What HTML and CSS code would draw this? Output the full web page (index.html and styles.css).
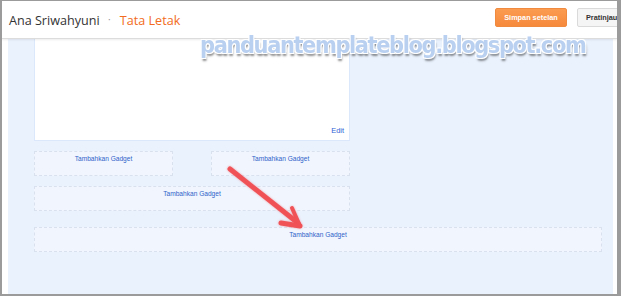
FILE: index.html
```html
<!DOCTYPE html>
<html lang="id">
<head>
    <meta charset="UTF-8">
    <title>Tata Letak</title>
    <link rel="stylesheet" href="styles.css">
</head>
<body>
    <div class="frame">
        <!-- top bar -->
        <div class="topbar">
            <div class="crumb">
                <span class="blog">Ana Sriwahyuni</span>
                <span class="sep">&middot;</span>
                <span class="page">Tata Letak</span>
            </div>
            <div class="actions">
                <button class="btn btn-save">Simpan setelan</button>
                <button class="btn btn-preview">Pratinjau</button>
            </div>
        </div>

        <!-- layout editor -->
        <div class="main">
            <div class="canvas">
                <div class="widget">
                    <a class="edit">Edit</a>
                </div>
                <div class="row-split">
                    <div class="slot">Tambahkan Gadget</div>
                    <div class="slot">Tambahkan Gadget</div>
                </div>
                <div class="slot slot-half">Tambahkan Gadget</div>
                <div class="slot slot-full">Tambahkan Gadget</div>
            </div>
        </div>

        <div class="watermark">panduantemplateblog.blogspot.com</div>

        <svg class="arrow" width="90" height="75" viewBox="0 0 90 75">
            <g stroke="#f0474c" stroke-linecap="round" fill="none" opacity="0.9">
                <path d="M6 7 L74 61" stroke-width="5"/>
                <path d="M76 64 L57 61" stroke-width="5"/>
                <path d="M76 64 L68 46" stroke-width="4"/>
            </g>
        </svg>
    </div>
</body>
</html>
```

FILE: styles.css
```css
html, body {
    margin: 0;
    padding: 0;
    background-color: #fff;
}
body {
    width: 621px;
    height: 298px;
    overflow: hidden;
}
.frame {
    position: relative;
    width: 621px;
    height: 296px;
    box-sizing: border-box;
    border: 2px solid #9b9b9b;
    border-top-width: 1px;
    border-right-width: 4px;
    overflow: hidden;
    display: flex;
    flex-direction: column;
}
.topbar {
    height: 37px;
    flex-shrink: 0;
    display: flex;
    align-items: flex-start;
    justify-content: space-between;
    border-bottom: 1px solid #dcdcdc;
    box-shadow: 0 1px 2px rgba(0, 0, 0, 0.08);
    position: relative;
    z-index: 1;
    background-color: #fff;
}
.crumb {
    font-family: "Open Sans", sans-serif;
    font-size: 12.6px;
    padding: 11px 0 0 7px;
    white-space: nowrap;
}
.blog {
    color: #333;
}
.sep {
    color: #999;
    font-size: 10px;
    vertical-align: 2px;
    margin: 0 6px 0 5px;
}
.page {
    color: #f26b21;
}
.actions {
    display: flex;
    gap: 10px;
    padding-top: 7px;
    margin-right: -14px;
}
.btn {
    font-family: "Liberation Sans", Arial, sans-serif;
    font-weight: bold;
    font-size: 7.3px;
    height: 19px;
    border-radius: 2px;
    padding: 0;
    white-space: nowrap;
}
.btn-save {
    width: 72px;
    color: #fff;
    background: linear-gradient(#fb9c50, #f6893c);
    border: 1px solid #ef8a3e;
}
.btn-preview {
    width: 54px;
    text-align: left;
    padding-left: 8px;
    color: #333;
    background-color: #f5f5f5;
    border: 1px solid #dadada;
}
.main {
    flex: 1;
    padding: 0 4px 0 6px;
}
.canvas {
    height: 100%;
    box-sizing: border-box;
    background-color: #eaf2fd;
    padding: 0 11px 0 26px;
    font-family: "Liberation Sans", Arial, sans-serif;
}
.widget {
    width: 316px;
    height: 102px;
    box-sizing: border-box;
    background-color: #fff;
    border: 1px solid #dbe7fa;
    border-top: none;
    display: flex;
    align-items: flex-end;
    justify-content: flex-end;
    padding: 0 5px 5px 0;
}
.edit {
    color: #2c62d6;
    font-size: 7.4px;
}
.slot {
    box-sizing: border-box;
    height: 25px;
    border: 1px dashed #d9e1ef;
    background-color: #f1f6fe;
    color: #2f62c9;
    font-size: 6.6px;
    text-align: center;
    padding-top: 3px;
}
.row-split {
    display: flex;
    gap: 38px;
    width: 316px;
    margin-top: 10px;
}
.row-split .slot {
    flex: 1;
}
.slot-half {
    width: 316px;
    margin-top: 10px;
}
.slot-full {
    margin-top: 16px;
}
.watermark {
    position: absolute;
    left: 198px;
    top: 31px;
    z-index: 2;
    font-family: "DejaVu Sans", Verdana, sans-serif;
    font-weight: bold;
    font-size: 21px;
    letter-spacing: -1.4px;
    color: #b9d0f0;
    transform: scaleY(1.12);
    transform-origin: left top;
    text-shadow: -1px -1px 0 #fff, 1px -1px 0 #fff, -1px 1px 0 #fff, 1px 1px 0 #fff,
        1px 2px 2px rgba(0, 0, 0, 0.45);
    white-space: nowrap;
}
.arrow {
    position: absolute;
    left: 222px;
    top: 161px;
    z-index: 2;
    filter: drop-shadow(0 0 1px rgba(240, 70, 76, 0.5));
}
```
